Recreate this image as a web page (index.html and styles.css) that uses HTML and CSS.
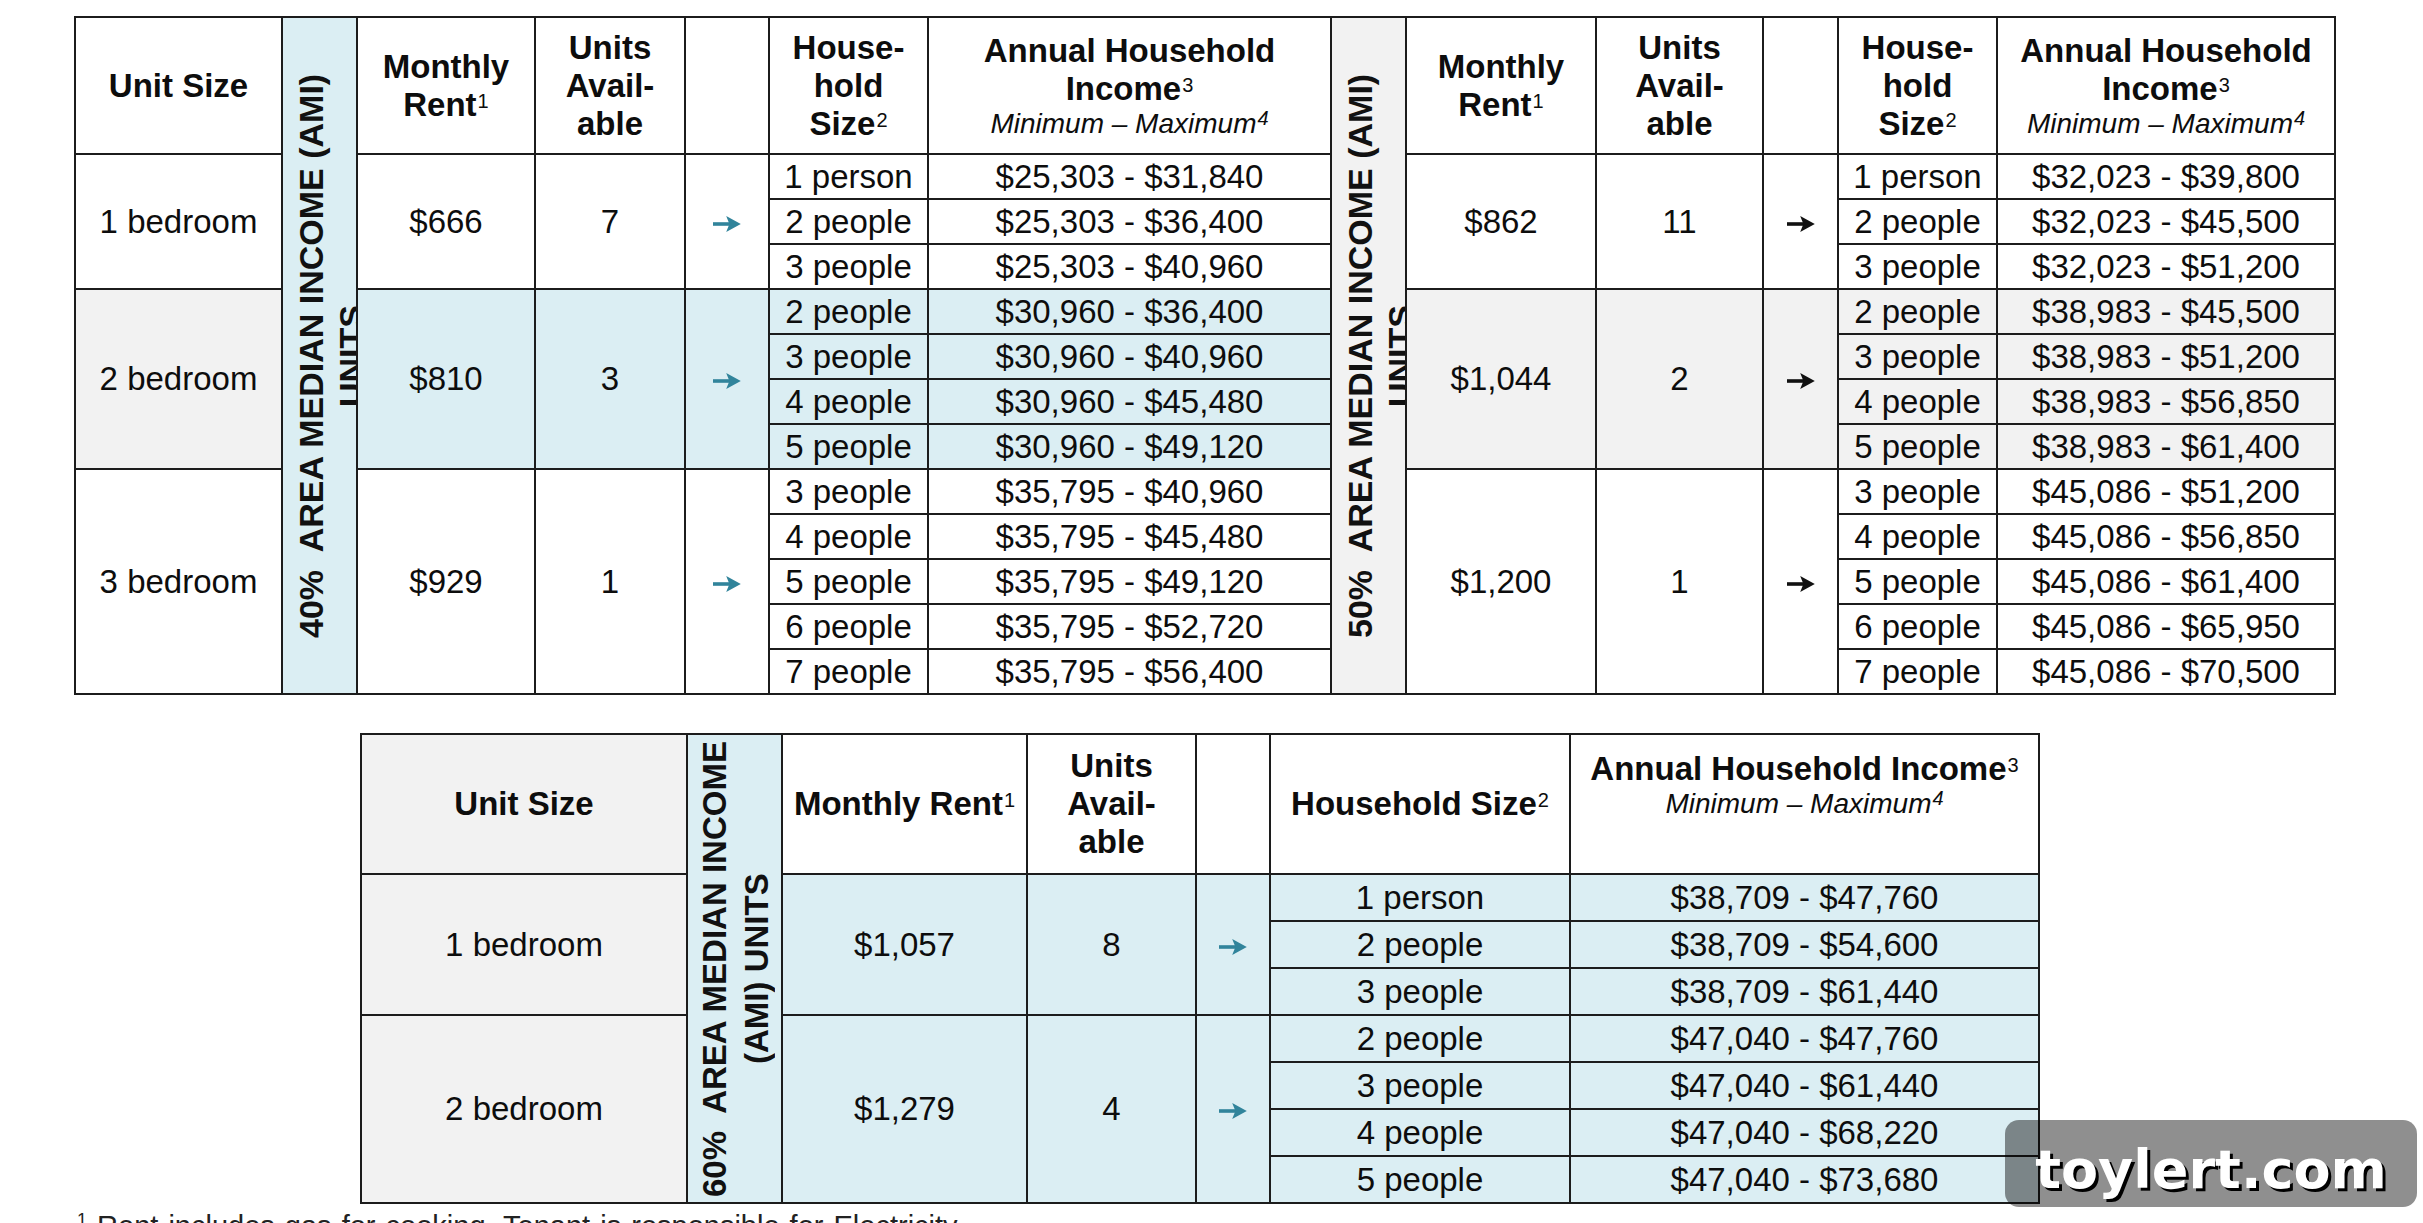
FILE: index.html
```html
<!DOCTYPE html>
<html lang="en">
<head>
<meta charset="utf-8">
<title>AMI Units</title>
<link rel="stylesheet" href="styles.css">
</head>
<body>
<svg class="defs" width="0" height="0" aria-hidden="true">
  <symbol id="arrow" viewBox="0 0 28 18">
    <path d="M0 7.2H19V10.8H0Z"/>
    <path d="M13.2 1L27.8 9L13.2 17L16.4 9Z"/>
  </symbol>
</svg>
<div class="page">
  <table class="grid grid-top">
    <colgroup>
      <col class="w-unit"><col class="w-ami"><col class="w-rent"><col class="w-units"><col class="w-arrow"><col class="w-hh"><col class="w-inc">
      <col class="w-ami"><col class="w-rent2"><col class="w-units2"><col class="w-arrow2"><col class="w-hh"><col class="w-inc2">
    </colgroup>
    <tr class="head">
      <th>Unit Size</th>
      <td class="ami b" rowspan="13"><div class="vwrap"><div class="vtext">40%&nbsp; AREA MEDIAN INCOME (AMI)<br>UNITS</div></div></td>
      <th>Monthly<br>Rent<sup class="fn">1</sup></th>
      <th>Units<br>Avail-<br>able</th>
      <th></th>
      <th>House-<br>hold<br>Size<sup class="fn">2</sup></th>
      <th>Annual Household<br>Income<sup class="fn">3</sup><span class="mm">Minimum – Maximum<sup class="fn">4</sup></span></th>
      <td class="ami g" rowspan="13"><div class="vwrap"><div class="vtext">50%&nbsp; AREA MEDIAN INCOME (AMI)<br>UNITS</div></div></td>
      <th>Monthly<br>Rent<sup class="fn">1</sup></th>
      <th>Units<br>Avail-<br>able</th>
      <th></th>
      <th>House-<br>hold<br>Size<sup class="fn">2</sup></th>
      <th>Annual Household<br>Income<sup class="fn">3</sup><span class="mm">Minimum – Maximum<sup class="fn">4</sup></span></th>
    </tr>

    <tr class="r">
      <td rowspan="3">1 bedroom</td>
      <td rowspan="3">$666</td>
      <td rowspan="3">7</td>
      <td rowspan="3" class="arr teal"><svg class="ico"><use href="#arrow"/></svg></td>
      <td>1 person</td><td>$25,303 - $31,840</td>
      <td rowspan="3">$862</td>
      <td rowspan="3">11</td>
      <td rowspan="3" class="arr dark"><svg class="ico"><use href="#arrow"/></svg></td>
      <td>1 person</td><td>$32,023 - $39,800</td>
    </tr>
    <tr class="r"><td>2 people</td><td>$25,303 - $36,400</td><td>2 people</td><td>$32,023 - $45,500</td></tr>
    <tr class="r"><td>3 people</td><td>$25,303 - $40,960</td><td>3 people</td><td>$32,023 - $51,200</td></tr>

    <tr class="r">
      <td rowspan="4" class="g">2 bedroom</td>
      <td rowspan="4" class="b">$810</td>
      <td rowspan="4" class="b">3</td>
      <td rowspan="4" class="b arr teal"><svg class="ico"><use href="#arrow"/></svg></td>
      <td class="b">2 people</td><td class="b">$30,960 - $36,400</td>
      <td rowspan="4" class="g">$1,044</td>
      <td rowspan="4" class="g">2</td>
      <td rowspan="4" class="g arr dark"><svg class="ico"><use href="#arrow"/></svg></td>
      <td class="g">2 people</td><td class="g">$38,983 - $45,500</td>
    </tr>
    <tr class="r"><td class="b">3 people</td><td class="b">$30,960 - $40,960</td><td class="g">3 people</td><td class="g">$38,983 - $51,200</td></tr>
    <tr class="r"><td class="b">4 people</td><td class="b">$30,960 - $45,480</td><td class="g">4 people</td><td class="g">$38,983 - $56,850</td></tr>
    <tr class="r"><td class="b">5 people</td><td class="b">$30,960 - $49,120</td><td class="g">5 people</td><td class="g">$38,983 - $61,400</td></tr>

    <tr class="r">
      <td rowspan="5">3 bedroom</td>
      <td rowspan="5">$929</td>
      <td rowspan="5">1</td>
      <td rowspan="5" class="arr teal"><svg class="ico"><use href="#arrow"/></svg></td>
      <td>3 people</td><td>$35,795 - $40,960</td>
      <td rowspan="5">$1,200</td>
      <td rowspan="5">1</td>
      <td rowspan="5" class="arr dark"><svg class="ico"><use href="#arrow"/></svg></td>
      <td>3 people</td><td>$45,086 - $51,200</td>
    </tr>
    <tr class="r"><td>4 people</td><td>$35,795 - $45,480</td><td>4 people</td><td>$45,086 - $56,850</td></tr>
    <tr class="r"><td>5 people</td><td>$35,795 - $49,120</td><td>5 people</td><td>$45,086 - $61,400</td></tr>
    <tr class="r"><td>6 people</td><td>$35,795 - $52,720</td><td>6 people</td><td>$45,086 - $65,950</td></tr>
    <tr class="r"><td>7 people</td><td>$35,795 - $56,400</td><td>7 people</td><td>$45,086 - $70,500</td></tr>
  </table>

  <table class="grid grid-bottom">
    <colgroup>
      <col class="v-unit"><col class="v-ami"><col class="v-rent"><col class="v-units"><col class="v-arrow"><col class="v-hh"><col class="v-inc">
    </colgroup>
    <tr class="head">
      <th class="g">Unit Size</th>
      <td class="ami b" rowspan="8"><div class="vwrap vwrap-b"><div class="vtext vtext-b">60%&nbsp; AREA MEDIAN INCOME<br>(AMI) UNITS</div></div></td>
      <th>Monthly Rent<sup class="fn">1</sup></th>
      <th>Units<br>Avail-<br>able</th>
      <th></th>
      <th>Household Size<sup class="fn">2</sup></th>
      <th class="top">Annual Household Income<sup class="fn">3</sup><span class="mm">Minimum – Maximum<sup class="fn">4</sup></span></th>
    </tr>
    <tr class="r">
      <td rowspan="3" class="g">1 bedroom</td>
      <td rowspan="3" class="b">$1,057</td>
      <td rowspan="3" class="b">8</td>
      <td rowspan="3" class="b arr teal"><svg class="ico"><use href="#arrow"/></svg></td>
      <td class="b">1 person</td><td class="b">$38,709 - $47,760</td>
    </tr>
    <tr class="r"><td class="b">2 people</td><td class="b">$38,709 - $54,600</td></tr>
    <tr class="r"><td class="b">3 people</td><td class="b">$38,709 - $61,440</td></tr>
    <tr class="r">
      <td rowspan="4" class="g">2 bedroom</td>
      <td rowspan="4" class="b">$1,279</td>
      <td rowspan="4" class="b">4</td>
      <td rowspan="4" class="b arr teal"><svg class="ico"><use href="#arrow"/></svg></td>
      <td class="b">2 people</td><td class="b">$47,040 - $47,760</td>
    </tr>
    <tr class="r"><td class="b">3 people</td><td class="b">$47,040 - $61,440</td></tr>
    <tr class="r"><td class="b">4 people</td><td class="b">$47,040 - $68,220</td></tr>
    <tr class="r"><td class="b">5 people</td><td class="b">$47,040 - $73,680</td></tr>
  </table>

  <p class="note"><sup class="note-fn">1</sup> Rent includes gas for cooking. Tenant is responsible for Electricity</p>

  <div class="watermark">toylert.com</div>
</div>
</body>
</html>
```

FILE: styles.css
```css
html, body {
  margin: 0;
  padding: 0;
  background: #ffffff;
  overflow: hidden;
}

body {
  font-family: "Liberation Sans", Arial, sans-serif;
  color: #0d0d0d;
}

.defs {
  position: absolute;
  width: 0;
  height: 0;
}

.page {
  position: relative;
  height: 1223px;
  box-sizing: border-box;
  padding: 16px 0 0 74px;
  overflow: hidden;
}

/* ---------- tables ---------- */
.grid {
  border-collapse: collapse;
  table-layout: fixed;
}

.grid th,
.grid td {
  border: 2px solid #1c1c1c;
  padding: 0;
  text-align: center;
  vertical-align: middle;
  font-size: 33px;
  line-height: 38px;
  white-space: nowrap;
}

.grid th {
  font-weight: bold;
}

.grid td {
  font-weight: normal;
}

.grid .b { background: #dbeef3; }
.grid .g { background: #f2f2f2; }

/* top table columns */
.grid-top { width: 2260px; }
.w-unit   { width: 207px; }
.w-ami    { width: 75px; }
.w-rent   { width: 178px; }
.w-units  { width: 150px; }
.w-arrow  { width: 84px; }
.w-hh     { width: 159px; }
.w-inc    { width: 403px; }
.w-rent2  { width: 190px; }
.w-units2 { width: 167px; }
.w-arrow2 { width: 75px; }
.w-inc2   { width: 338px; }

.grid-top .head { height: 137px; }
.grid-top .r    { height: 45px; }

/* bottom table columns */
.grid-bottom {
  width: 1678px;
  margin: 38px 0 0 286px;
}
.v-unit  { width: 326px; }
.v-ami   { width: 95px; }
.v-rent  { width: 245px; }
.v-units { width: 169px; }
.v-arrow { width: 74px; }
.v-hh    { width: 300px; }
.v-inc   { width: 469px; }

.grid-bottom .head { height: 140px; }
.grid-bottom .r    { height: 47px; }

.grid th.top {
  vertical-align: top;
  padding-top: 15px;
}

/* superscripts & sub-caption */
.fn {
  font-size: 20px;
  font-weight: normal;
  line-height: 0;
  vertical-align: 8px;
  margin-left: 1px;
}

.mm {
  display: block;
  font-size: 28px;
  line-height: 32px;
  font-style: italic;
  font-weight: normal;
}

/* arrows */
.arr .ico {
  width: 28px;
  height: 18px;
  display: inline-block;
  vertical-align: middle;
  fill: currentColor;
}
.teal { color: #31849b; }
.dark { color: #111111; }

/* vertical AMI labels */
.ami { overflow: hidden; }

.vwrap {
  height: 670px;
  width: 73px;
  overflow: hidden;
  display: flex;
  align-items: center;
  padding-left: 8px;
  box-sizing: border-box;
}

.vtext {
  flex-shrink: 0;
  height: 670px;
  writing-mode: vertical-rl;
  transform: rotate(180deg);
  font-weight: bold;
  font-size: 34px;
  line-height: 40px;
  text-align: center;
  white-space: nowrap;
  color: #111111;
}

.vwrap-b {
  height: 464px;
  width: 93px;
  padding-left: 6px;
}

.vtext-b {
  height: 464px;
  font-size: 33px;
  line-height: 42px;
}

/* footnote */
.note {
  margin: 6px 0 0 3px;
  font-size: 29px;
  line-height: 32px;
  color: #222222;
  word-spacing: 2px;
}

.note-fn {
  font-size: 18px;
  line-height: 0;
  vertical-align: 10px;
}

/* watermark overlay */
.watermark {
  position: absolute;
  left: 2005px;
  top: 1120px;
  width: 412px;
  height: 87px;
  box-sizing: border-box;
  padding-top: 19px;
  border-radius: 14px;
  background: rgba(0, 0, 0, 0.44);
  color: #ffffff;
  font-family: "DejaVu Sans", sans-serif;
  font-weight: bold;
  font-size: 54px;
  line-height: 62px;
  text-align: center;
  text-shadow: 3px 3px 0 #000000;
}
```
